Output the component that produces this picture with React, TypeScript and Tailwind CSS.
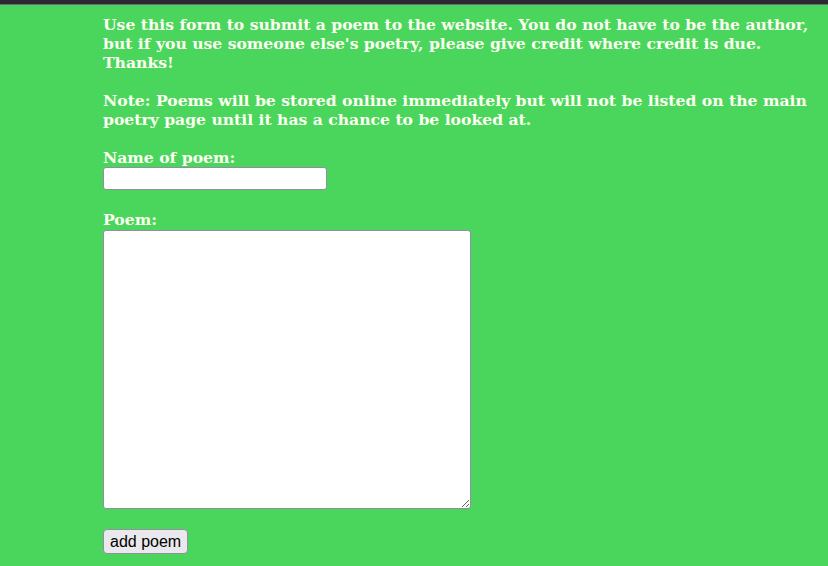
const App = () => {
  return (
    <div className="min-h-[566px] w-full bg-[#4ad65c] font-['DejaVu_Serif',serif]">
      <div className="h-[4px] bg-[#2b2a33]" />
      <div className="h-px bg-[#6b6b70]" />
      <div className="w-[818px] pl-[103px] pt-[10px] text-[15.6px] leading-[19px] font-bold text-[#fbfff0]">
        <p>
          Use this form to submit a poem to the website. You do not have to be the author,
          but if you use someone else's poetry, please give credit where credit is due.
          Thanks!
        </p>
        <p className="mt-[19px]">
          Note: Poems will be stored online immediately but will not be listed on the main
          poetry page until it has a chance to be looked at.
        </p>
        <form className="mt-[19px]" onSubmit={(e) => e.preventDefault()}>
          <label className="block">Name of poem:</label>
          <input
            type="text"
            className="block h-[23px] w-[224px] rounded-[3px] border border-[#8f8f9d] bg-white px-1 font-['DejaVu_Sans',sans-serif] text-[13px] font-normal text-black"
          />
          <label className="mt-[20px] block">Poem:</label>
          <textarea className="mt-[1px] block h-[279px] w-[368px] rounded-[3px] border border-[#8f8f9d] bg-white font-['DejaVu_Sans',sans-serif] text-[13px] font-normal text-black" />
          <button
            type="submit"
            className="mt-[20px] block h-[25px] rounded-[4px] border border-[#8f8f9d] bg-[#e9e9ed] px-[6px] font-['Liberation_Sans',sans-serif] text-[16px] leading-[23px] font-normal text-black"
          >
            add poem
          </button>
        </form>
      </div>
    </div>
  );
};

export default App;
